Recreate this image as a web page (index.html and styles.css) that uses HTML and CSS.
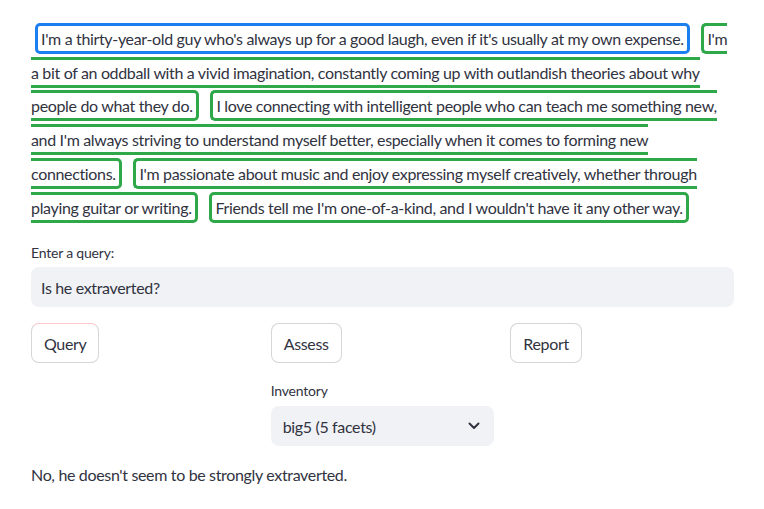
FILE: index.html
```html
<!DOCTYPE html>
<html>
<head>
<meta charset="utf-8">
<link rel="stylesheet" href="styles.css">
</head>
<body>
<main class="app">
  <p class="story"><span class="hl hl-blue">I'm a thirty-year-old guy who's always up for a good laugh, even if it's usually at my own expense.</span> <span class="hl hl-green">I'm<br>a bit of an oddball with a vivid imagination, constantly coming up with outlandish theories about why<br>people do what they do.</span> <span class="hl hl-green">I love connecting with intelligent people who can teach me something new,<br>and I'm always striving to understand myself better, especially when it comes to forming new<br>connections.</span> <span class="hl hl-green">I'm passionate about music and enjoy expressing myself creatively, whether through<br>playing guitar or writing.</span> <span class="hl hl-green">Friends tell me I'm one-of-a-kind, and I wouldn't have it any other way.</span></p>

  <div class="field query-field">
    <label class="label">Enter a query:</label>
    <div class="input">Is he extraverted?</div>
  </div>

  <div class="cols">
    <div class="col"><button class="btn btn-focus">Query</button></div>
    <div class="col"><button class="btn">Assess</button></div>
    <div class="col"><button class="btn">Report</button></div>
  </div>

  <div class="cols inv-row">
    <div class="col"></div>
    <div class="col">
      <div class="field">
        <label class="label">Inventory</label>
        <div class="select">
          <span>big5 (5 facets)</span>
          <svg class="chev" width="12" height="8" viewBox="0 0 12 8"><path d="M1.5 1.5 L6 6 L10.5 1.5" fill="none" stroke="#31333f" stroke-width="2" stroke-linecap="round" stroke-linejoin="round"/></svg>
        </div>
      </div>
    </div>
    <div class="col"></div>
  </div>

  <p class="answer">No, he doesn't seem to be strongly extraverted.</p>
</main>
</body>
</html>
```

FILE: styles.css
```css
html, body {
  margin: 0;
  padding: 0;
  background: #ffffff;
}
body {
  font-family: Lato, "Noto Sans", "Liberation Sans", sans-serif;
  color: #31333f;
  letter-spacing: -0.34px;
}
.app {
  width: 703px;
  padding: 22px 0 0 31px;
  display: flex;
  flex-direction: column;
}
.story {
  margin: 0;
  font-size: 16px;
  line-height: 33.7px;
  white-space: nowrap;
}
.hl {
  border: 3px solid;
  border-radius: 5px;
  padding: 3px 3px;
  margin: 0 4px;
}
.hl-blue { border-color: #1c7ff0; }
.hl-green { border-color: #2fa84a; }

.field {
  display: flex;
  flex-direction: column;
  gap: 4px;
}
.query-field { margin-top: 18px; }
.label {
  font-size: 14px;
  line-height: 21px;
  letter-spacing: -0.2px;
}
.input, .select {
  height: 40px;
  box-sizing: border-box;
  background: #f0f2f6;
  border-radius: 8px;
  display: flex;
  align-items: center;
  padding: 0 10px;
  font-size: 16px;
}
.select {
  padding: 0 14px 0 12px;
  justify-content: space-between;
}
.cols {
  display: flex;
  gap: 16px;
  margin-top: 16px;
}
.col {
  flex: 1 1 0;
  min-width: 0;
}
.btn {
  font-family: inherit;
  font-size: 16px;
  letter-spacing: -0.34px;
  color: #31333f;
  background: #ffffff;
  border: 1px solid rgba(49, 51, 63, 0.2);
  border-radius: 8px;
  height: 40px;
  padding: 0 12px;
  cursor: pointer;
}
.btn-focus {
  border-top-color: rgba(255, 75, 75, 0.3);
}
.inv-row { margin-top: 17px; }
.select { margin-top: 1px; }
.answer {
  margin: 16px 0 0;
  font-size: 16px;
  line-height: 25.6px;
}
```
